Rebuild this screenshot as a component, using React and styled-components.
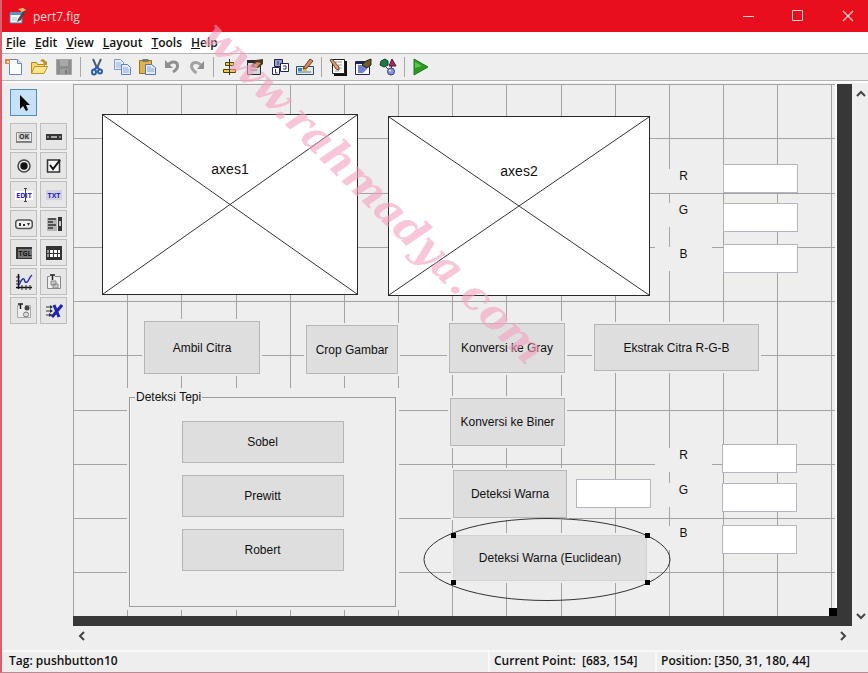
import styled, { createGlobalStyle, css } from "styled-components";

const GlobalStyle = createGlobalStyle`
	* {
		box-sizing: border-box;
	}

	body {
		margin: 0;
		background: #eeeeee;
		color: #111;
		font-family: "Open Sans", "Noto Sans", sans-serif;
		font-size: 12px;
	}

	button,
	input {
		font: inherit;
		color: inherit;
		margin: 0;
		padding: 0;
	}
`;

const Window = styled.div`
	position: relative;
	display: flex;
	flex-direction: column;
	min-height: 100vh;
	border-left: 2px solid #d9606c;
	border-bottom: 1px solid #b98a90;
	background: #eeeeee;
	overflow: hidden;
`;

const TitleBar = styled.header`
	display: flex;
	align-items: center;
	height: 32px;
	margin-left: -2px;
	padding-left: 9px;
	background: #e80e1d;
	color: #ffdcdc;
`;

const Title = styled.h1`
	flex: 1;
	margin: 0 0 0 6px;
	font-size: 12px;
	font-weight: 400;
`;

const WindowControls = styled.div`
	display: flex;
	gap: 10px;
`;

const WindowButton = styled.button`
	display: grid;
	place-items: center;
	width: 40px;
	height: 30px;
	border: 0;
	background: none;
`;

const MenuBar = styled.nav`
	display: flex;
	align-items: center;
	gap: 9px;
	height: 22px;
	padding-left: 4px;
	border-bottom: 1px solid #b4b4b4;
	background: #fff;
`;

const MenuItem = styled.button`
	border: 0;
	background: none;
	font-size: 12px;
	font-weight: 600;
	line-height: 20px;

	&::first-letter {
		text-decoration: underline;
	}
`;

const ToolBar = styled.div`
	display: flex;
	align-items: center;
	height: 27px;
	margin-left: -1px;
	border-bottom: 1px solid #b4b4b4;
`;

const ToolButton = styled.button`
	display: grid;
	place-items: center;
	width: 25px;
	height: 24px;
	border: 0;
	background: none;
`;

const Separator = styled.span`
	width: 8px;
	height: 20px;
	background: linear-gradient(#a8a8a8, #a8a8a8) center / 1px 100% no-repeat;
`;

const Workspace = styled.main`
	flex: 1;
	display: grid;
	grid-template-columns: 71px minmax(0, 1fr) 16px;
	grid-template-rows: 1fr 24px;
	padding-top: 1px;
	border-top: 2px solid #fafafa;
`;

const Palette = styled.aside`
	display: flex;
	flex-direction: column;
	align-items: flex-start;
	gap: 7px;
	padding: 5px 0 0 8px;
`;

const PaletteGroup = styled.div`
	display: grid;
	grid-template-columns: 27px 27px;
	gap: 2px 3px;
`;

const PaletteButton = styled.button`
	display: grid;
	place-items: center;
	width: 27px;
	height: 27px;
	border: 1px solid ${({ $selected }) => ($selected ? "#4d8fbd" : "#bdbdbd")};
	background: ${({ $selected }) => ($selected ? "#c7e2f6" : "#e6e6e6")};
`;

const Viewport = styled.section`
	background: #373737;
	overflow: hidden;
`;

/* the figure being designed: its size is the size of the figure itself */
const Figure = styled.div`
	position: relative;
	width: 764px;
	height: 532px;
	background: #eeeeee;
	border-right: 2px solid #fcfcfc;
	font-family: "Liberation Sans", Arial, sans-serif;
	font-size: 12px;
`;

const Grid = styled.svg`
	display: block;
	stroke: #a3a3a3;
`;

const placed = css`
	position: absolute;
	left: ${({ $x }) => $x}px;
	top: ${({ $y }) => $y}px;
	width: ${({ $w }) => $w}px;
	height: ${({ $h }) => $h}px;
`;

const Axes = styled.div`
	${placed}
	border: 1px solid #2a2a2a;
	background: #fff;
	font-size: 14px;
	text-align: center;

	svg {
		position: absolute;
		inset: 0;
	}

	span {
		position: relative;
		display: block;
		padding-top: 45px;
		line-height: 18px;
	}
`;

const PushButton = styled.button`
	border: 1px solid #b5b5b5;
	background: #dedede;
	text-align: center;
`;

const CanvasButton = styled(PushButton)`
	${placed}
	box-shadow: 0 0 0 2px #eeeeee;
	${({ $selected }) => $selected && "border-color: #d2d2d2;"}
`;

const EditBox = styled.input`
	${placed}
	border: 1px solid #b4b6bd;
	background: #fff;
`;

const StaticText = styled.label`
	${placed}
	background: #eeeeee;
	line-height: 15px;
	text-align: center;
`;

const PanelArea = styled.div`
	${placed}
	padding: 2px 3px 3px 2px;
	background: #eeeeee;
`;

const Panel = styled.fieldset`
	height: 100%;
	margin: 0;
	padding: 0 5px;
	border: 1px solid #9c9c9c;
	box-shadow: inset 1px 0 #fafafa;

	legend {
		padding: 0 1px;
		line-height: 14px;
	}
`;

const PanelButtons = styled.div`
	display: grid;
	grid-auto-rows: 42px;
	gap: 12px;
	width: 162px;
	margin: 17px auto 0;
`;

const Marks = styled.svg`
	position: absolute;
	left: 0;
	top: 0;
	pointer-events: none;
`;

const VerticalScroll = styled.div`
	display: flex;
	flex-direction: column;
	justify-content: space-between;
`;

const HorizontalScroll = styled.div`
	grid-column: 2;
	display: flex;
	justify-content: space-between;
	align-items: flex-start;
`;

const ScrollButton = styled.button`
	display: grid;
	place-items: center;
	width: 18px;
	height: 20px;
	border: 0;
	background: none;
`;

const StatusBar = styled.footer`
	display: grid;
	grid-template-columns: minmax(0, 1fr) 167px 213px;
	height: 22px;
	border-top: 2px solid #f8f8f8;
	font-weight: 600;
	line-height: 18px;
`;

const StatusCell = styled.span`
	padding-left: 7px;
	white-space: pre;

	& + & {
		padding-left: 4px;
		border-left: 2px solid #f8f8f8;
	}
`;

const Watermark = styled.div`
	position: absolute;
	left: 222px;
	top: 14px;
	color: rgba(244, 160, 190, 0.6);
	font-family: "DejaVu Serif", serif;
	font-size: 42px;
	font-style: italic;
	font-weight: 700;
	line-height: 42px;
	white-space: nowrap;
	transform: rotate(45deg);
	transform-origin: 0 0;
	pointer-events: none;
`;

function Icon({ children, size = 18 }) {
	return (
		<svg width={size} height={size} viewBox="0 0 18 18" fill="none" aria-hidden="true">
			{children}
		</svg>
	);
}

const ICONS = {
	app: (
		<>
			<path d="M1 6h12v10H1z" fill="#f3f6fb" stroke="#5b7fa8" />
			<path d="M1 5h12v3H1z" fill="#5f92c8" />
			<path d="M9 12l6-9 2 1-5 9-4 2z" fill="#4c4a44" />
			<path d="M9 2l5-1 3 2-4 2z" fill="#e9c46b" />
			<path d="M3 10h5v4H3z" fill="#cfdcee" />
		</>
	),
	newFile: (
		<>
			<path d="M4.500 1.500h8l4 4v11h-12z" fill="#fbfdff" stroke="#6d86b8" />
			<path d="M12.500 1.500v4h4" fill="#cfdcf2" stroke="#6d86b8" />
			<path d="M0 1h5v5H0z" fill="#e8824a" />
			<path d="M2 3h2v2H2z" fill="#ffe9c0" />
		</>
	),
	open: (
		<>
			<path d="M1.500 15.500v-11h5l1 2h7v3" fill="#f6d873" stroke="#b58a25" />
			<path d="M1.500 15.500l3-7h13l-3.500 7z" fill="#fde58b" stroke="#c0932b" />
			<path d="M10 3c2-3 5-2 6 1l1-1v4h-4l1-1c-1-2-2-3-4-3z" fill="#c28f2a" />
		</>
	),
	save: (
		<>
			<path d="M1.500 1.500h15v15h-15z" fill="#8e8e8e" stroke="#a5a5a5" />
			<path d="M5 2h8v6H5z" fill="#a9a9a9" />
			<path d="M5 11h8v5H5z" fill="#9f9f9f" />
			<path d="M10 12h2v4h-2z" fill="#777" />
		</>
	),
	cut: (
		<>
			<path d="M5 1l4 9M13 1L9 10" stroke="#4d5c7a" strokeWidth="2" />
			<path d="M9 9l-3 3M9 9l3 3" stroke="#2d5fae" strokeWidth="2" />
			<ellipse cx="6" cy="14" rx="2" ry="2.500" stroke="#2d5fae" strokeWidth="2" />
			<ellipse cx="12" cy="13.500" rx="2" ry="2" stroke="#2d5fae" strokeWidth="2" />
		</>
	),
	copy: (
		<>
			<path d="M1.500 1.500h6l3 3v7h-9z" fill="#e3ecfa" stroke="#7f98c9" />
			<path d="M3 5h5M3 7h5M3 9h5" stroke="#9db3dd" />
			<path d="M8.500 6.500h6l3 3v7h-9z" fill="#e3ecfa" stroke="#6381bd" />
			<path d="M10 10h5M10 12h6M10 14h6" stroke="#8ea8da" />
		</>
	),
	paste: (
		<>
			<path d="M1.500 2.500h12v13h-12z" fill="#e2b444" stroke="#94701f" />
			<path d="M4.500 1h6v3h-6z" fill="#777" />
			<path d="M7.500 6.500h6l4 3v7h-10z" fill="#e3ecfa" stroke="#5875b4" />
			<path d="M9 9h4M9 11h7M9 13h7" stroke="#86a2d8" />
		</>
	),
	undo: (
		<>
			<path d="M5 7c4-5 9-3 9.500 0 .5 3-1 5-4.500 7" stroke="#8f8f8f" strokeWidth="3" />
			<path d="M2 2v8h8z" fill="#8f8f8f" />
		</>
	),
	redo: (
		<>
			<path d="M13 7C9 3 4 4 3.500 8c0 3 2 5 5 7" stroke="#a2a2a2" strokeWidth="3" />
			<path d="M16 3v8H9z" fill="#8f8f8f" />
		</>
	),
	align: (
		<>
			<path d="M8.500 1v16" stroke="#23235c" />
			<path d="M4.500 4.500h8v3h-8z" fill="#f2cd31" stroke="#4f4300" />
			<path d="M2.500 11.500h12v3h-12z" fill="#f2cd31" stroke="#4f4300" />
			<path d="M8.500 5v2M8.500 12v2" stroke="#23235c" />
		</>
	),
	menuEditor: (
		<>
			<path d="M1.500 2.500h13v14h-13z" fill="#d6d6d6" stroke="#292929" />
			<path d="M1 2h8v3H1z" fill="#292929" />
			<path d="M4 9h7M4 12h7" stroke="#777" />
			<path d="M5 8l5-6 7-1v5l-5 4z" fill="#4a3525" />
			<path d="M7 8l4-4 4 1-4 4z" fill="#c99264" />
		</>
	),
	tabOrder: (
		<>
			<path d="M3.500 1.500h8v7h-8z" fill="#99a0cf" stroke="#22224c" />
			<path d="M1.500 9.500h7v7h-7z" fill="#fff" stroke="#22224c" />
			<path d="M9.500 5.500h8v8h-8z" fill="#fff" stroke="#22224c" />
			<path d="M7 3v4M4.500 11v4h2M12 8h3v3h-3" stroke="#2f3290" />
		</>
	),
	toolbarEditor: (
		<>
			<path d="M.5 8.500h17v8H.5z" fill="#dfe8ef" stroke="#334a60" />
			<path d="M2 10h4v3H2z" fill="#3986bd" />
			<path d="M7 10h4v3H7z" fill="#d8c23d" />
			<path d="M2 14h13" stroke="#66788a" />
			<path d="M8 9l6-8 3 2-6 7-4 1z" fill="#d98b55" stroke="#6c3d20" />
		</>
	),
	editor: (
		<>
			<path d="M5 3h13v15H5z" fill="#111" />
			<path d="M3.500 1.500h12v14h-12z" fill="#fff" stroke="#222" />
			<path d="M6 4h7M9 7h4M11 10h2M6 13h4" stroke="#9a9a9a" />
			<path d="M1 2l2-1 7 8v3l-3-1z" fill="#d9a078" stroke="#70421f" />
		</>
	),
	inspector: (
		<>
			<path d="M1.500 3.500h14v13h-14z" fill="#fff" stroke="#23234e" />
			<path d="M2 4h13v2H2z" fill="#23234e" />
			<path d="M4 7h9v8H4z" fill="#7480d0" />
			<path d="M9 15l4-4v4z" fill="#fff" />
			<path d="M8 7l4-4 5-2v6l-4 3z" fill="#6b5b2c" stroke="#2e2610" />
		</>
	),
	browser: (
		<>
			<path d="M5 7l6 6M13 5l-1 8" stroke="#333" />
			<path d="M2 3l4-2 3 2v4L5 9 1 7z" fill="#1d7b46" stroke="#0d4526" />
			<path d="M13 1l4 7h-7z" fill="#a32a62" stroke="#571433" />
			<circle cx="12" cy="13.500" r="3.500" fill="#8892df" stroke="#333d83" />
			<circle cx="11" cy="12.500" r="1" fill="#fff" />
		</>
	),
	run: (
		<>
			<path d="M2 1l14 8L2 17z" fill="#2d9a24" stroke="#1e7a1b" />
			<path d="M3 4l7 4-7 2z" fill="#5fc552" />
		</>
	),
	select: <path d="M5 1v14l3-3 3 5 2-1-2-5h4z" fill="#000" />,
	pushButton: (
		<>
			<path d="M1 4h16v11H1z" fill="#777" />
			<path d="M1 4h15v9H1z" fill="#efefef" />
			<path d="M1.500 4.500h15v10h-15z" stroke="#8a8a8a" />
			<path d="M3 5h12v7H3z" fill="#cfcfcf" />
			<text x="9" y="11" textAnchor="middle" fontSize="7" fontWeight="700" fill="#333">OK</text>
		</>
	),
	slider: (
		<>
			<path d="M1 6h16v6H1z" fill="#363636" />
			<path d="M6 8h6v2H6z" fill="#aaa" />
			<path d="M2 8h2v2H2zM14 8h2v2h-2z" fill="#888" />
		</>
	),
	radio: (
		<>
			<circle cx="9" cy="9" r="6" fill="#e8e8e8" stroke="#444" strokeWidth="1.500" />
			<circle cx="9" cy="9" r="3.700" fill="#111" />
		</>
	),
	checkBox: (
		<>
			<path d="M2.500 3h12v12h-12z" fill="#f6f6f6" stroke="#333" strokeWidth="1.500" />
			<path d="M5 8l3 4 7-9" stroke="#111" strokeWidth="2" />
		</>
	),
	editText: (
		<>
			<path d="M0 5h18v9H0z" fill="#fff" />
			<text x="9" y="12" textAnchor="middle" fontSize="7" fontWeight="700" fill="#2622cf">EDIT</text>
			<path d="M10.500 3v12M9 2.500h3M9 15.500h3" stroke="#444" />
		</>
	),
	staticText: (
		<>
			<path d="M1 4h16v10H1z" fill="#d2d2dc" />
			<text x="9" y="12" textAnchor="middle" fontSize="7" fontWeight="700" fill="#2622cf">TXT</text>
		</>
	),
	popup: (
		<>
			<rect x=".7" y="5" width="16.600" height="8.500" rx="3" fill="#f0f0f0" stroke="#555" strokeWidth="1.500" />
			<path d="M4 8h2v3H4zM8 9h2v2H8zM12 8h3l-1.500 3z" fill="#333" />
		</>
	),
	listBox: (
		<>
			<path d="M2 3h10v13H2z" fill="#b5b5b5" />
			<path d="M3 4h8M3 7h5M3 10h8M3 13h5" stroke="#333" strokeWidth="1.500" />
			<path d="M13 2h4v14h-4z" fill="#333" />
			<path d="M14 6h2v5h-2z" fill="#c7c7dc" />
		</>
	),
	toggle: (
		<>
			<path d="M1 3h16v12H1z" fill="#333" />
			<path d="M3 5h14v9H3z" fill="#777" />
			<text x="10" y="12" textAnchor="middle" fontSize="7" fontWeight="700" fill="#1a1a1a">TGL</text>
		</>
	),
	table: (
		<>
			<path d="M1 2h16v14H1z" fill="#333" />
			<path d="M5 6h3v3H5zM9 6h3v3H9zM13 6h2v3h-2zM5 10h3v3H5zM9 10h3v3H9zM13 10h2v3h-2z" fill="#fff" />
			<path d="M2 6h2v3H2zM2 10h2v3H2z" fill="#999" />
		</>
	),
	axes: (
		<>
			<path d="M3.500 1v15M1 14.500h16" stroke="#111" strokeWidth="1.500" />
			<path d="M1 4h4M1 8h4M1 11h4M7 12v5M11 12v5M15 12v5" stroke="#222" />
			<path d="M4 12c2-5 4-7 5-6s0 4 3 3c2-1 2-5 5-7" stroke="#2731b5" strokeWidth="1.500" />
		</>
	),
	panel: (
		<>
			<path d="M5 3.500H2.500v12h13v-12H10" fill="#eee" stroke="#888" />
			<path d="M5 2h5M7.500 2v5" stroke="#222" strokeWidth="1.500" />
			<path d="M6 8h5v4H6zM8 11h5v4H8z" fill="#ccc" stroke="#888" />
		</>
	),
	buttonGroup: (
		<>
			<path d="M5 3.500H2.500v12h13v-12H10" fill="#eee" stroke="#aaa" />
			<path d="M3 2h5M5.500 2v5" stroke="#222" strokeWidth="1.500" />
			<circle cx="12" cy="6" r="2.500" fill="#444" />
			<circle cx="11" cy="12.500" r="2.500" fill="#ddd" stroke="#777" />
		</>
	),
	activeX: (
		<>
			<path d="M1 5h6M1 9h6M1 13h6" stroke="#333" />
			<path d="M5 3l3 2-3 2zM5 7l3 2-3 2zM4 11l3 2-3 2z" fill="#333" />
			<path d="M9 3l5 12M17 3L7 15" stroke="#1c22b8" strokeWidth="3" />
		</>
	),
	minimize: <path d="M4 9.500h11" stroke="#ffd0d0" />,
	maximize: <path d="M3.500 3.500h10v10h-10z" stroke="#ffd0d0" />,
	close: <path d="M4 4l10 10M14 4L4 14" stroke="#ffd0d0" strokeWidth="1.300" />,
	up: <path d="M5 11l4-4 4 4" stroke="#444" strokeWidth="2" />,
	down: <path d="M5 7l4 4 4-4" stroke="#444" strokeWidth="2" />,
	left: <path d="M11 5L7 9l4 4" stroke="#444" strokeWidth="2" />,
	right: <path d="M7 5l4 4-4 4" stroke="#444" strokeWidth="2" />,
};

const MENUS = ["File", "Edit", "View", "Layout", "Tools", "Help"];

const TOOL_GROUPS = [
	["newFile", "open", "save"],
	["cut", "copy", "paste", "undo", "redo"],
	["align", "menuEditor", "tabOrder", "toolbarEditor"],
	["editor", "inspector", "browser"],
	["run"],
];

const COMPONENTS = [
	"pushButton",
	"slider",
	"radio",
	"checkBox",
	"editText",
	"staticText",
	"popup",
	"listBox",
	"toggle",
	"table",
	"axes",
	"panel",
	"buttonGroup",
	"activeX",
];

const GRID_X = [0, 54, 108, 163, 217, 271, 325, 379, 433, 488, 542, 596, 650, 704, 758];
const GRID_Y = [0, 54, 109, 163, 217, 271, 326, 380, 434, 488];

const AXES = [
	{ name: "axes1", x: 29, y: 30, w: 256, h: 181 },
	{ name: "axes2", x: 315, y: 32, w: 262, h: 180 },
];

const BUTTONS = [
	{ label: "Ambil Citra", x: 71, y: 237, w: 116, h: 53 },
	{ label: "Crop Gambar", x: 233, y: 241, w: 92, h: 49 },
	{ label: "Konversi ke Gray", x: 376, y: 239, w: 116, h: 50 },
	{ label: "Ekstrak Citra R-G-B", x: 521, y: 240, w: 165, h: 47 },
	{ label: "Konversi ke Biner", x: 377, y: 314, w: 115, h: 48 },
	{ label: "Deteksi Warna", x: 380, y: 386, w: 114, h: 48 },
	{ label: "Deteksi Warna (Euclidean)", x: 380, y: 451, w: 194, h: 46, selected: true },
];

const CHANNELS = [
	{ id: "r1", label: "R", labelY: 85, x: 650, y: 80 },
	{ id: "g1", label: "G", labelY: 119, x: 650, y: 119 },
	{ id: "b1", label: "B", labelY: 163, x: 650, y: 160 },
	{ id: "r2", label: "R", labelY: 364, x: 649, y: 360 },
	{ id: "g2", label: "G", labelY: 399, x: 649, y: 399 },
	{ id: "b2", label: "B", labelY: 442, x: 649, y: 441 },
];

const HANDLES = [
	[378, 449],
	[572, 449],
	[378, 496],
	[572, 496],
];

function Canvas() {
	return (
		<Figure>
			<Grid width="762" height="532" shapeRendering="crispEdges" aria-hidden="true">
				{GRID_X.map((x) => (
					<path key={x} d={`M${x + 0.5} 0v532`} />
				))}
				{GRID_Y.map((y) => (
					<path key={y} d={`M0 ${y + 0.5}h764`} />
				))}
			</Grid>
			{AXES.map(({ name, x, y, w, h }) => (
				<Axes key={name} $x={x} $y={y} $w={w} $h={h}>
					<svg width="100%" height="100%" stroke="#333" aria-hidden="true">
						<line x1="0" y1="0" x2="100%" y2="100%" />
						<line x1="100%" y1="0" x2="0" y2="100%" />
					</svg>
					<span>{name}</span>
				</Axes>
			))}
			{BUTTONS.map(({ label, x, y, w, h, selected }) => (
				<CanvasButton key={label} $x={x} $y={y} $w={w} $h={h} $selected={selected}>
					{label}
				</CanvasButton>
			))}
			<PanelArea $x={54} $y={304} $w={272} $h={222}>
				<Panel>
					<legend>Deteksi Tepi</legend>
					<PanelButtons>
						<PushButton>Sobel</PushButton>
						<PushButton>Prewitt</PushButton>
						<PushButton>Robert</PushButton>
					</PanelButtons>
				</Panel>
			</PanelArea>
			<EditBox aria-label="Warna" $x={503} $y={395} $w={75} $h={29} />
			{CHANNELS.map(({ id, label, labelY }) => (
				<StaticText key={id} htmlFor={id} $x={582} $y={labelY} $w={57} $h={24}>
					{label}
				</StaticText>
			))}
			{CHANNELS.map(({ id, x, y }) => (
				<EditBox key={id} id={id} $x={x} $y={y} $w={75} $h={29} />
			))}
			<Marks width="764" height="532" aria-hidden="true">
				<ellipse cx="474" cy="475.5" rx="123" ry="41" fill="none" stroke="#333" />
				{HANDLES.map(([x, y]) => (
					<rect key={`${x}-${y}`} x={x} y={y} width="5" height="5" />
				))}
				<rect x="756" y="524" width="8" height="8" />
			</Marks>
		</Figure>
	);
}

export default function App() {
	return (
		<>
			<GlobalStyle />
			<Window>
				<TitleBar>
					<Icon>{ICONS.app}</Icon>
					<Title>pert7.fig</Title>
					<WindowControls>
						{["minimize", "maximize", "close"].map((name) => (
							<WindowButton key={name} aria-label={name}>
								<Icon>{ICONS[name]}</Icon>
							</WindowButton>
						))}
					</WindowControls>
				</TitleBar>
				<MenuBar>
					{MENUS.map((menu) => (
						<MenuItem key={menu}>{menu}</MenuItem>
					))}
				</MenuBar>
				<ToolBar>
					{TOOL_GROUPS.map((group, index) => [
						index > 0 && <Separator key={`separator-${index}`} />,
						...group.map((name) => (
							<ToolButton key={name} aria-label={name}>
								<Icon>{ICONS[name]}</Icon>
							</ToolButton>
						)),
					])}
				</ToolBar>
				<Workspace>
					<Palette>
						<PaletteButton $selected aria-label="select">
							<Icon>{ICONS.select}</Icon>
						</PaletteButton>
						<PaletteGroup>
							{COMPONENTS.map((name) => (
								<PaletteButton key={name} aria-label={name}>
									<Icon>{ICONS[name]}</Icon>
								</PaletteButton>
							))}
						</PaletteGroup>
					</Palette>
					<Viewport>
						<Canvas />
					</Viewport>
					<VerticalScroll>
						<ScrollButton aria-label="scroll up">
							<Icon>{ICONS.up}</Icon>
						</ScrollButton>
						<ScrollButton aria-label="scroll down">
							<Icon>{ICONS.down}</Icon>
						</ScrollButton>
					</VerticalScroll>
					<HorizontalScroll>
						<ScrollButton aria-label="scroll left">
							<Icon>{ICONS.left}</Icon>
						</ScrollButton>
						<ScrollButton aria-label="scroll right">
							<Icon>{ICONS.right}</Icon>
						</ScrollButton>
					</HorizontalScroll>
				</Workspace>
				<StatusBar>
					<StatusCell>Tag: pushbutton10</StatusCell>
					<StatusCell>Current Point:  [683, 154]</StatusCell>
					<StatusCell>Position: [350, 31, 180, 44]</StatusCell>
				</StatusBar>
				<Watermark>www.rahmadya.com</Watermark>
			</Window>
		</>
	);
}
